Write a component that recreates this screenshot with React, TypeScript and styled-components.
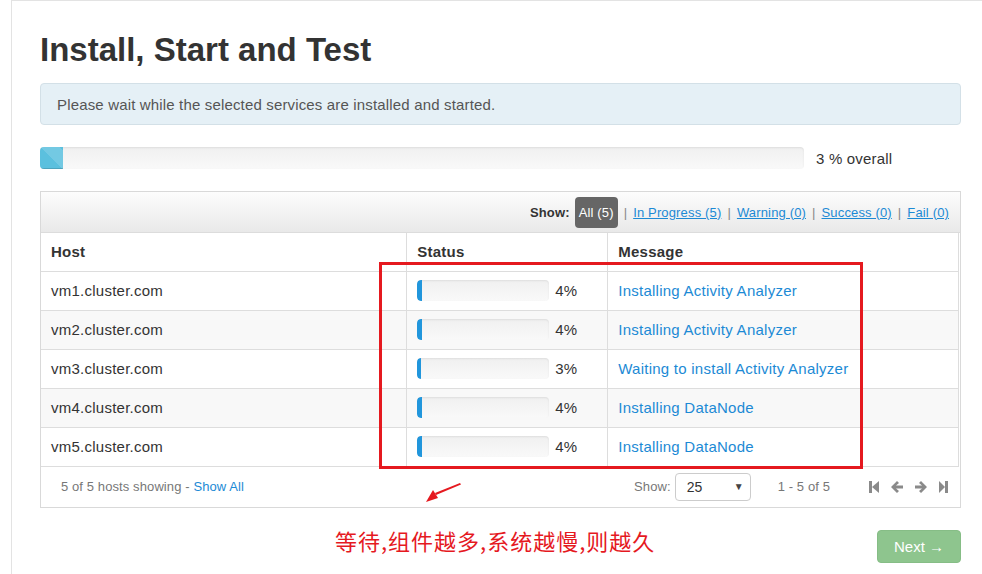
import React from "react";
import styled, { createGlobalStyle } from "styled-components";

const Global = createGlobalStyle`
  html, body { margin: 0; padding: 0; background: #fff; overflow: hidden; }
  body { font-family: "Liberation Sans", Arial, sans-serif; color: #333; }
  * { box-sizing: border-box; }
`;

const Page = styled.div`
  position: relative;
  width: 982px;
  height: 574px;
  overflow: hidden;
`;

const Frame = styled.div`
  margin-left: 11px;
  width: 1000px;
  min-height: 600px;
  border-left: 1px solid #e3e3e3;
  border-top: 1px solid #e3e3e3;
  padding: 0 0 0 28px;
`;

const Content = styled.div`
  width: 921px;
`;

const Title = styled.h1`
  margin: 31px 0 0;
  font-size: 33px;
  line-height: 36px;
  font-weight: bold;
  color: #333;
`;

const Alert = styled.div`
  margin-top: 15px;
  height: 42px;
  padding: 0 16px;
  display: flex;
  align-items: center;
  background: #e5f0f6;
  border: 1px solid #d3e0e7;
  border-radius: 4px;
  color: #555;
  font-size: 15px;
  letter-spacing: 0.16px;
`;

const OverallRow = styled.div`
  margin-top: 22px;
  display: flex;
  align-items: center;
  gap: 12px;
  font-size: 15px;
  letter-spacing: 0.2px;
  color: #333;
`;

const Track = styled.div<{ $w: number; $h: number }>`
  width: ${(p) => p.$w}px;
  height: ${(p) => p.$h}px;
  background: linear-gradient(#f0f0f0, #f9f9f9);
  border-radius: 4px;
  box-shadow: inset 0 1px 2px rgba(0, 0, 0, 0.08);
  overflow: hidden;
  display: flex;
`;

const StripedFill = styled.div`
  height: 100%;
  background-color: #5bc0de;
  background-image: linear-gradient(
    45deg,
    rgba(255, 255, 255, 0.15) 25%,
    transparent 25%,
    transparent 50%,
    rgba(255, 255, 255, 0.15) 50%,
    rgba(255, 255, 255, 0.15) 75%,
    transparent 75%,
    transparent
  );
  background-size: 40px 40px;
  box-shadow: inset 0 -1px 0 rgba(0, 0, 0, 0.15);
`;

const SolidFill = styled.div`
  height: 100%;
  background: #2196dc;
  border-radius: 4px 0 0 4px;
`;

const Box = styled.div`
  margin-top: 22px;
  border: 1px solid #d9d9d9;
`;

const Toolbar = styled.div`
  height: 41px;
  padding: 4px 11px 4px 0;
  display: flex;
  justify-content: flex-end;
  align-items: center;
  background: linear-gradient(#fdfdfd, #e9e9e9);
  border-bottom: 1px solid #dcdcdc;
  font-size: 13px;
  letter-spacing: 0.15px;
`;

const ShowLabel = styled.span`
  font-weight: bold;
  color: #333;
  margin-right: 5px;
`;

const Pill = styled.span`
  display: inline-flex;
  align-items: center;
  height: 31px;
  padding: 0 4px;
  background: #666;
  color: #fff;
  border-radius: 4px;
`;

const Sep = styled.span`
  color: #888;
  margin: 0 6px;
`;

const FilterLink = styled.a`
  color: #1c8ad5;
  text-decoration: underline;
  cursor: pointer;
`;

const Table = styled.table`
  width: 918px;
  border-collapse: collapse;
  font-size: 15px;
  letter-spacing: 0.25px;
`;

const Th = styled.th<{ $w: number; $first?: boolean }>`
  width: ${(p) => p.$w}px;
  height: 38px;
  padding: 0 10px;
  text-align: left;
  font-weight: bold;
  color: #333;
  border-bottom: 1px solid #ddd;
  border-left: ${(p) => (p.$first ? "none" : "1px solid #ddd")};
  border-right: 1px solid #ddd;
`;

const Tr = styled.tr<{ $alt: boolean }>`
  background: ${(p) => (p.$alt ? "#f8f8f8" : "#fff")};
`;

const Td = styled.td<{ $first?: boolean }>`
  height: 39px;
  padding: 0 10px;
  color: #333;
  border-bottom: 1px solid #ddd;
  border-left: ${(p) => (p.$first ? "none" : "1px solid #ddd")};
  border-right: 1px solid #ddd;
`;

const StatusCell = styled.div`
  display: flex;
  align-items: center;
  gap: 6px;
`;

const MsgLink = styled.a`
  color: #1c8ad5;
  cursor: pointer;
`;

const Footer = styled.div`
  height: 40px;
  display: flex;
  align-items: center;
  padding: 0 12px 0 20px;
  font-size: 13px;
  letter-spacing: 0.1px;
  color: #777;
`;

const FooterLeft = styled.div`
  flex: 1;
`;

const ShowAll = styled.a`
  color: #1c8ad5;
`;

const Select = styled.div`
  margin-left: 4px;
  width: 76px;
  height: 28px;
  border: 1px solid #ccc;
  border-radius: 4px;
  background: #fff;
  display: flex;
  align-items: center;
  justify-content: space-between;
  padding: 0 6px 0 11px;
  font-size: 14px;
  color: #333;
`;

const Caret = styled.span`
  font-size: 10px;
  color: #444;
`;

const Range = styled.span`
  margin-left: 27px;
`;

const Pager = styled.div`
  margin-left: 39px;
  display: flex;
  align-items: center;
  gap: 12px;
`;

const Actions = styled.div`
  margin-top: 22px;
  display: flex;
  justify-content: flex-end;
`;

const NextButton = styled.button`
  width: 84px;
  height: 33px;
  border: 1px solid #86bd86;
  border-radius: 4px;
  background: #8ec58e;
  color: #fff;
  font-family: "Liberation Sans", Arial, sans-serif;
  font-size: 15px;
  padding: 0;
`;

const RedBox = styled.div`
  position: absolute;
  left: 379px;
  top: 262px;
  width: 484px;
  height: 207px;
  border: 3px solid #e5191f;
  pointer-events: none;
`;

const ArrowSvg = styled.svg`
  position: absolute;
  left: 424px;
  top: 482px;
`;

const Note = styled.div`
  position: absolute;
  left: 335px;
  top: 525px;
  font-family: "Noto Sans CJK SC", sans-serif;
  font-size: 22px;
  line-height: 30px;
  color: #e5191f;
  letter-spacing: 1px;
`;

const Icon = ({ kind }: { kind: "first" | "prev" | "next" | "last" }) => {
  const c = "#8a8a8a";
  if (kind === "first")
    return (
      <svg width="10" height="12" viewBox="0 0 10 12">
        <rect x="0" y="0" width="3" height="12" fill={c} />
        <polygon points="3,6 10,0 10,12" fill={c} />
      </svg>
    );
  if (kind === "last")
    return (
      <svg width="9" height="12" viewBox="0 0 9 12">
        <polygon points="0,0 6,6 0,12" fill={c} />
        <rect x="6" y="0" width="3" height="12" fill={c} />
      </svg>
    );
  const pts = "0,6 6,0 8,2 5,4.6 12,4.6 12,7.4 5,7.4 8,10 6,12";
  return (
    <svg width="12" height="12" viewBox="0 0 12 12">
      <polygon
        points={pts}
        fill={c}
        transform={kind === "next" ? "translate(12,0) scale(-1,1)" : undefined}
      />
    </svg>
  );
};

const rows = [
  { host: "vm1.cluster.com", pct: 4, msg: "Installing Activity Analyzer" },
  { host: "vm2.cluster.com", pct: 4, msg: "Installing Activity Analyzer" },
  { host: "vm3.cluster.com", pct: 3, msg: "Waiting to install Activity Analyzer" },
  { host: "vm4.cluster.com", pct: 4, msg: "Installing DataNode" },
  { host: "vm5.cluster.com", pct: 4, msg: "Installing DataNode" },
];

export default function App() {
  return (
    <Page>
      <Global />
      <Frame>
        <Content>
          <Title>Install, Start and Test</Title>
          <Alert>Please wait while the selected services are installed and started.</Alert>
          <OverallRow>
            <Track $w={764} $h={22}>
              <StripedFill style={{ width: 23 }} />
            </Track>
            <span>3 % overall</span>
          </OverallRow>
          <Box>
            <Toolbar>
              <ShowLabel>Show:</ShowLabel>
              <Pill>All (5)</Pill>
              <Sep>|</Sep>
              <FilterLink>In Progress (5)</FilterLink>
              <Sep>|</Sep>
              <FilterLink>Warning (0)</FilterLink>
              <Sep>|</Sep>
              <FilterLink>Success (0)</FilterLink>
              <Sep>|</Sep>
              <FilterLink>Fail (0)</FilterLink>
            </Toolbar>
            <Table>
              <thead>
                <tr>
                  <Th $w={366} $first>Host</Th>
                  <Th $w={201}>Status</Th>
                  <Th $w={351}>Message</Th>
                </tr>
              </thead>
              <tbody>
                {rows.map((r, i) => (
                  <Tr key={r.host} $alt={i % 2 === 1}>
                    <Td $first>{r.host}</Td>
                    <Td>
                      <StatusCell>
                        <Track $w={132} $h={21}>
                          <SolidFill style={{ width: r.pct + 1 }} />
                        </Track>
                        <span>{r.pct}%</span>
                      </StatusCell>
                    </Td>
                    <Td>
                      <MsgLink>{r.msg}</MsgLink>
                    </Td>
                  </Tr>
                ))}
              </tbody>
            </Table>
            <Footer>
              <FooterLeft>
                5 of 5 hosts showing - <ShowAll>Show All</ShowAll>
              </FooterLeft>
              <span>Show:</span>
              <Select>
                <span>25</span>
                <Caret>▼</Caret>
              </Select>
              <Range>1 - 5 of 5</Range>
              <Pager>
                <Icon kind="first" />
                <Icon kind="prev" />
                <Icon kind="next" />
                <Icon kind="last" />
              </Pager>
            </Footer>
          </Box>
          <Actions>
            <NextButton>Next →</NextButton>
          </Actions>
        </Content>
      </Frame>
      <RedBox />
      <ArrowSvg width="40" height="22" viewBox="0 0 40 22">
        <polygon points="36,1 37,2.5 12,13 11,11" fill="#e5191f" />
        <polygon points="2,20 9,8 14,16" fill="#e5191f" />
      </ArrowSvg>
      <Note>等待,组件越多,系统越慢,则越久</Note>
    </Page>
  );
}
